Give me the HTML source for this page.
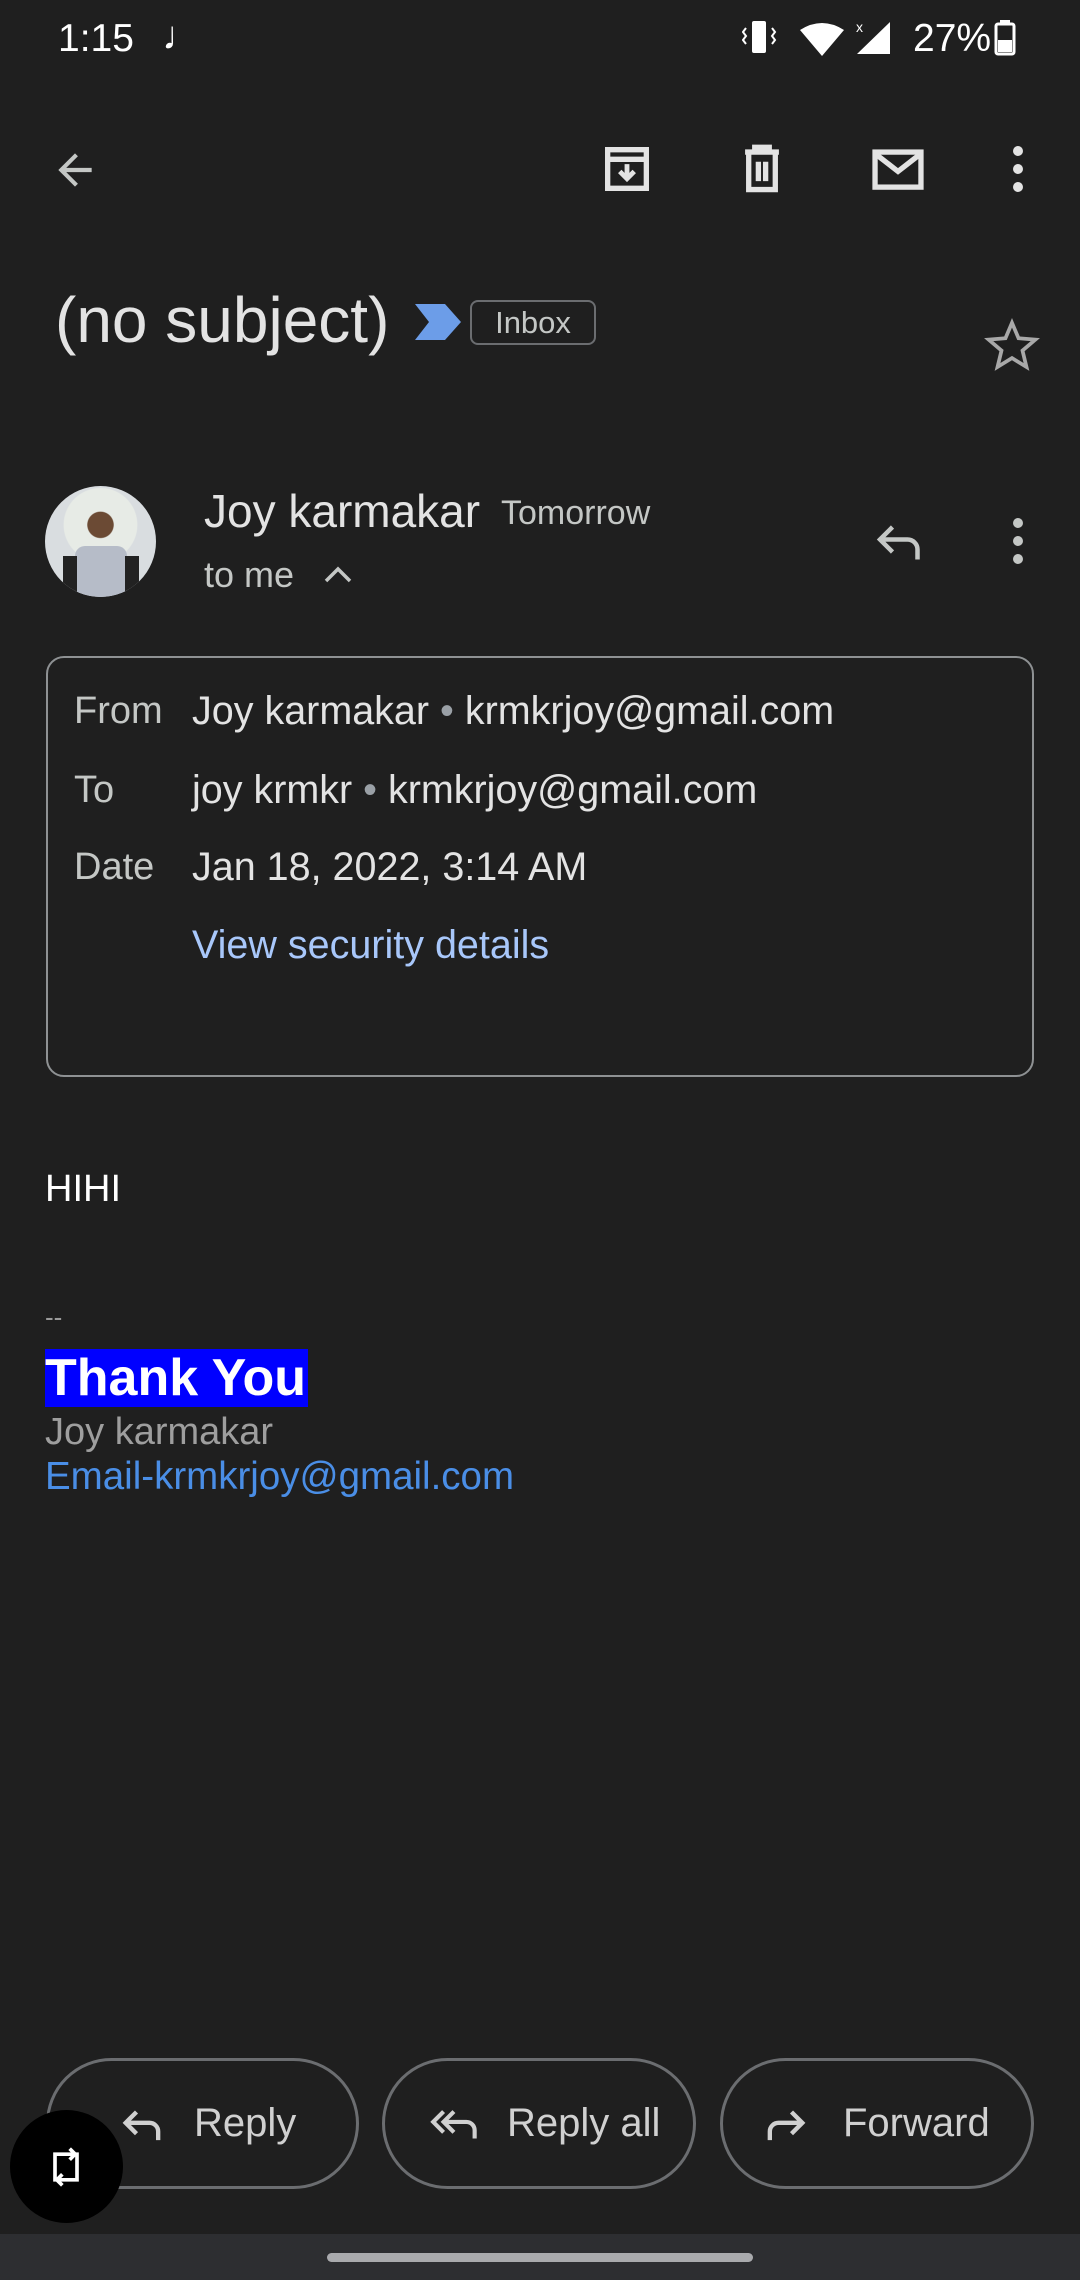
<!DOCTYPE html>
<html><head><meta charset="utf-8"><style>
*{margin:0;padding:0;box-sizing:border-box}
body{width:1080px;height:2280px;background:#1f1f1f;font-family:"Liberation Sans",sans-serif;color:#e3e3e3;position:relative;overflow:hidden}
.a{position:absolute;white-space:nowrap}
svg{position:absolute}
.lbl{color:#c4c7c5;font-size:38px}
.val{color:#e3e3e3;font-size:39.5px}
.btn{position:absolute;top:2058px;height:131px;border:3px solid #6b6d70;border-radius:66px;font-size:40px;color:#d0d0d0}
</style></head><body>
<div class="a" style="left:58px;top:17px;font-size:39px;color:#fff">1:15</div>
<div class="a" style="left:162px;top:14px;font-size:40px;color:#fff">♩</div>
<div class="a" style="left:913px;top:17px;font-size:39px;color:#fff">27%</div>
<svg style="left:742px;top:18px" width="300" height="42" viewBox="0 0 300 42">
<rect x="10" y="3" width="14" height="32" rx="2" fill="#fff"/>
<path d="M4 10l-3 4 3 4-3 4 3 4M30 10l3 4-3 4 3 4-3 4" stroke="#fff" stroke-width="2" fill="none"/>
<path d="M58 12 Q80 -2 102 12 L80 38Z" fill="#fff"/>
<path d="M115 36 L148 4 L148 36Z" fill="#fff"/>
<text x="114" y="14" font-size="14" fill="#fff" font-family="Liberation Sans">x</text>
<rect x="254" y="6" width="18" height="30" rx="2" fill="none" stroke="#fff" stroke-width="3"/><rect x="258" y="2" width="10" height="5" fill="#fff"/><rect x="256" y="22" width="14" height="12" fill="#fff"/>
</svg>
<svg style="left:50px;top:145px" width="50" height="50" viewBox="0 0 24 24"><path d="M20 11H7.8l5.6-5.6L12 4l-8 8 8 8 1.4-1.4L7.8 13H20z" fill="#c4c7c5"/></svg>
<svg style="left:598px;top:140px" width="58" height="58" viewBox="0 0 24 24"><path d="M4 4h16v16H4z M4 8h16" stroke="#e3e3e3" stroke-width="2.2" fill="none"/><path d="M12 10v6M9 13l3 3 3-3" stroke="#e3e3e3" stroke-width="2" fill="none"/></svg>
<svg style="left:733px;top:140px" width="58" height="58" viewBox="0 0 24 24"><path d="M5 5h14M9 5V3h6v2M6.5 5.5v15h11v-15M10.5 9v8M13.5 9v8" stroke="#e3e3e3" stroke-width="2.2" fill="none"/></svg>
<svg style="left:869px;top:140px" width="58" height="58" viewBox="0 0 24 24"><rect x="2.5" y="5" width="19" height="14.5" stroke="#e3e3e3" stroke-width="2.2" fill="none"/><path d="M3 6l9 7 9-7" stroke="#e3e3e3" stroke-width="2.2" fill="none"/></svg>
<svg style="left:1000px;top:140px" width="36" height="58" viewBox="0 0 36 58"><circle cx="18" cy="11" r="5" fill="#e3e3e3"/><circle cx="18" cy="29" r="5" fill="#e3e3e3"/><circle cx="18" cy="47" r="5" fill="#e3e3e3"/></svg>
<div class="a" style="left:55px;top:283px;font-size:64px;color:#e3e3e3">(no subject)</div>
<svg style="left:413px;top:302px" width="50" height="40" viewBox="0 0 50 40"><path d="M2 2h30l16 18-16 18H2l14-18z" fill="#6c9de8"/></svg>
<div class="a" style="left:470px;top:300px;width:126px;height:45px;border:2px solid #6b6d70;border-radius:8px;font-size:31px;color:#c4c7c5;text-align:center;line-height:41px">Inbox</div>
<svg style="left:984px;top:317px" width="56" height="56" viewBox="0 0 24 24"><path d="M12 2.5l2.8 6.6 7.2.6-5.5 4.7 1.7 7-6.2-3.8-6.2 3.8 1.7-7L2 9.7l7.2-.6z" fill="none" stroke="#a8a8a8" stroke-width="1.6"/></svg>
<div class="a" style="left:45px;top:486px;width:111px;height:111px;border-radius:50%;background:radial-gradient(circle at 50% 35%,#6b4a34 0 14%,#e7ebe6 15% 40%,#d9dde0 41%);overflow:hidden"><div style="position:absolute;left:30px;top:60px;width:52px;height:60px;background:#b6bcc8;border-radius:10px"></div><div style="position:absolute;left:18px;top:70px;width:14px;height:40px;background:#222"></div><div style="position:absolute;left:80px;top:70px;width:14px;height:40px;background:#222"></div></div>
<div class="a" style="left:204px;top:484px;font-size:46px;color:#e3e3e3">Joy karmakar</div>
<div class="a" style="left:501px;top:494px;font-size:34px;color:#c4c7c5">Tomorrow</div>
<div class="a" style="left:204px;top:554px;font-size:36px;color:#c4c7c5">to me</div>
<svg style="left:322px;top:563px" width="32" height="24" viewBox="0 0 32 24"><path d="M4 18l12-12 12 12" stroke="#c4c7c5" stroke-width="3.5" fill="none"/></svg>
<svg style="left:870px;top:512px" width="60" height="60" viewBox="0 0 24 24"><path d="M9 6l-5 5 5 5M4 11h11a4 4 0 0 1 4 4v4" stroke="#c4c7c5" stroke-width="1.8" fill="none"/></svg>
<svg style="left:1000px;top:512px" width="36" height="58" viewBox="0 0 36 58"><circle cx="18" cy="11" r="5" fill="#c4c7c5"/><circle cx="18" cy="29" r="5" fill="#c4c7c5"/><circle cx="18" cy="47" r="5" fill="#c4c7c5"/></svg>
<div class="a" style="left:46px;top:656px;width:988px;height:421px;border:2.5px solid #8e9193;border-radius:18px"></div>
<div class="a lbl" style="left:74px;top:690px">From</div><div class="a val" style="left:192px;top:689px">Joy karmakar <span style="color:#9aa0a6">•</span> krmkrjoy@gmail.com</div>
<div class="a lbl" style="left:74px;top:769px">To</div><div class="a val" style="left:192px;top:768px">joy krmkr <span style="color:#9aa0a6">•</span> krmkrjoy@gmail.com</div>
<div class="a lbl" style="left:74px;top:846px">Date</div><div class="a val" style="left:192px;top:845px">Jan 18, 2022, 3:14 AM</div>
<div class="a" style="left:192px;top:923px;font-size:39.5px;color:#a8c7fa">View security details</div>
<div class="a" style="left:45px;top:1168px;font-size:38px;color:#fff">HIHI</div>
<div class="a" style="left:45px;top:1302px;font-size:26px;color:#9a9a9a">--</div>
<div class="a" style="left:45px;top:1349px;height:58px;background:#0000ff;color:#fff;font-weight:bold;font-size:52px;line-height:58px;padding-right:2px">Thank You</div>
<div class="a" style="left:45px;top:1411px;font-size:38px;color:#9e9e9e">Joy karmakar</div>
<div class="a" style="left:45px;top:1455px;font-size:38.5px;color:#4a8ee6">Email-krmkrjoy@gmail.com</div>
<div class="btn" style="left:46px;width:313px"><svg style="left:68px;top:38px" width="52" height="52" viewBox="0 0 24 24"><path d="M9 6l-5 5 5 5M4 11h11a4 4 0 0 1 4 4v4" stroke="#d0d0d0" stroke-width="2" fill="none"/></svg><span class="a" style="left:145px;top:40px">Reply</span></div>
<div class="btn" style="left:382px;width:314px"><svg style="left:42px;top:38px" width="58" height="50" viewBox="0 0 28 24"><path d="M8 6l-5 5 5 5M13 6l-5 5 5 5M8 11h11a4 4 0 0 1 4 4v4" stroke="#d0d0d0" stroke-width="2" fill="none"/></svg><span class="a" style="left:122px;top:40px">Reply all</span></div>
<div class="btn" style="left:720px;width:314px"><svg style="left:36px;top:38px" width="52" height="52" viewBox="0 0 24 24"><path d="M15 6l5 5-5 5M20 11H9a4 4 0 0 0-4 4v4" stroke="#d0d0d0" stroke-width="2" fill="none"/></svg><span class="a" style="left:120px;top:40px">Forward</span></div>
<div class="a" style="left:10px;top:2110px;width:113px;height:113px;border-radius:50%;background:#000"></div>
<svg style="left:46px;top:2145px" width="40" height="44" viewBox="0 0 20 24"><path d="M4 20V5h11M12 2l3 3-3 3M16 4v15H5M8 16l-3 3 3 3" stroke="#fff" stroke-width="2" fill="none"/></svg>
<div class="a" style="left:0;top:2234px;width:1080px;height:46px;background:#2d2e31"></div>
<div class="a" style="left:327px;top:2253px;width:426px;height:9px;border-radius:5px;background:#a9aaad"></div>
</body></html>
